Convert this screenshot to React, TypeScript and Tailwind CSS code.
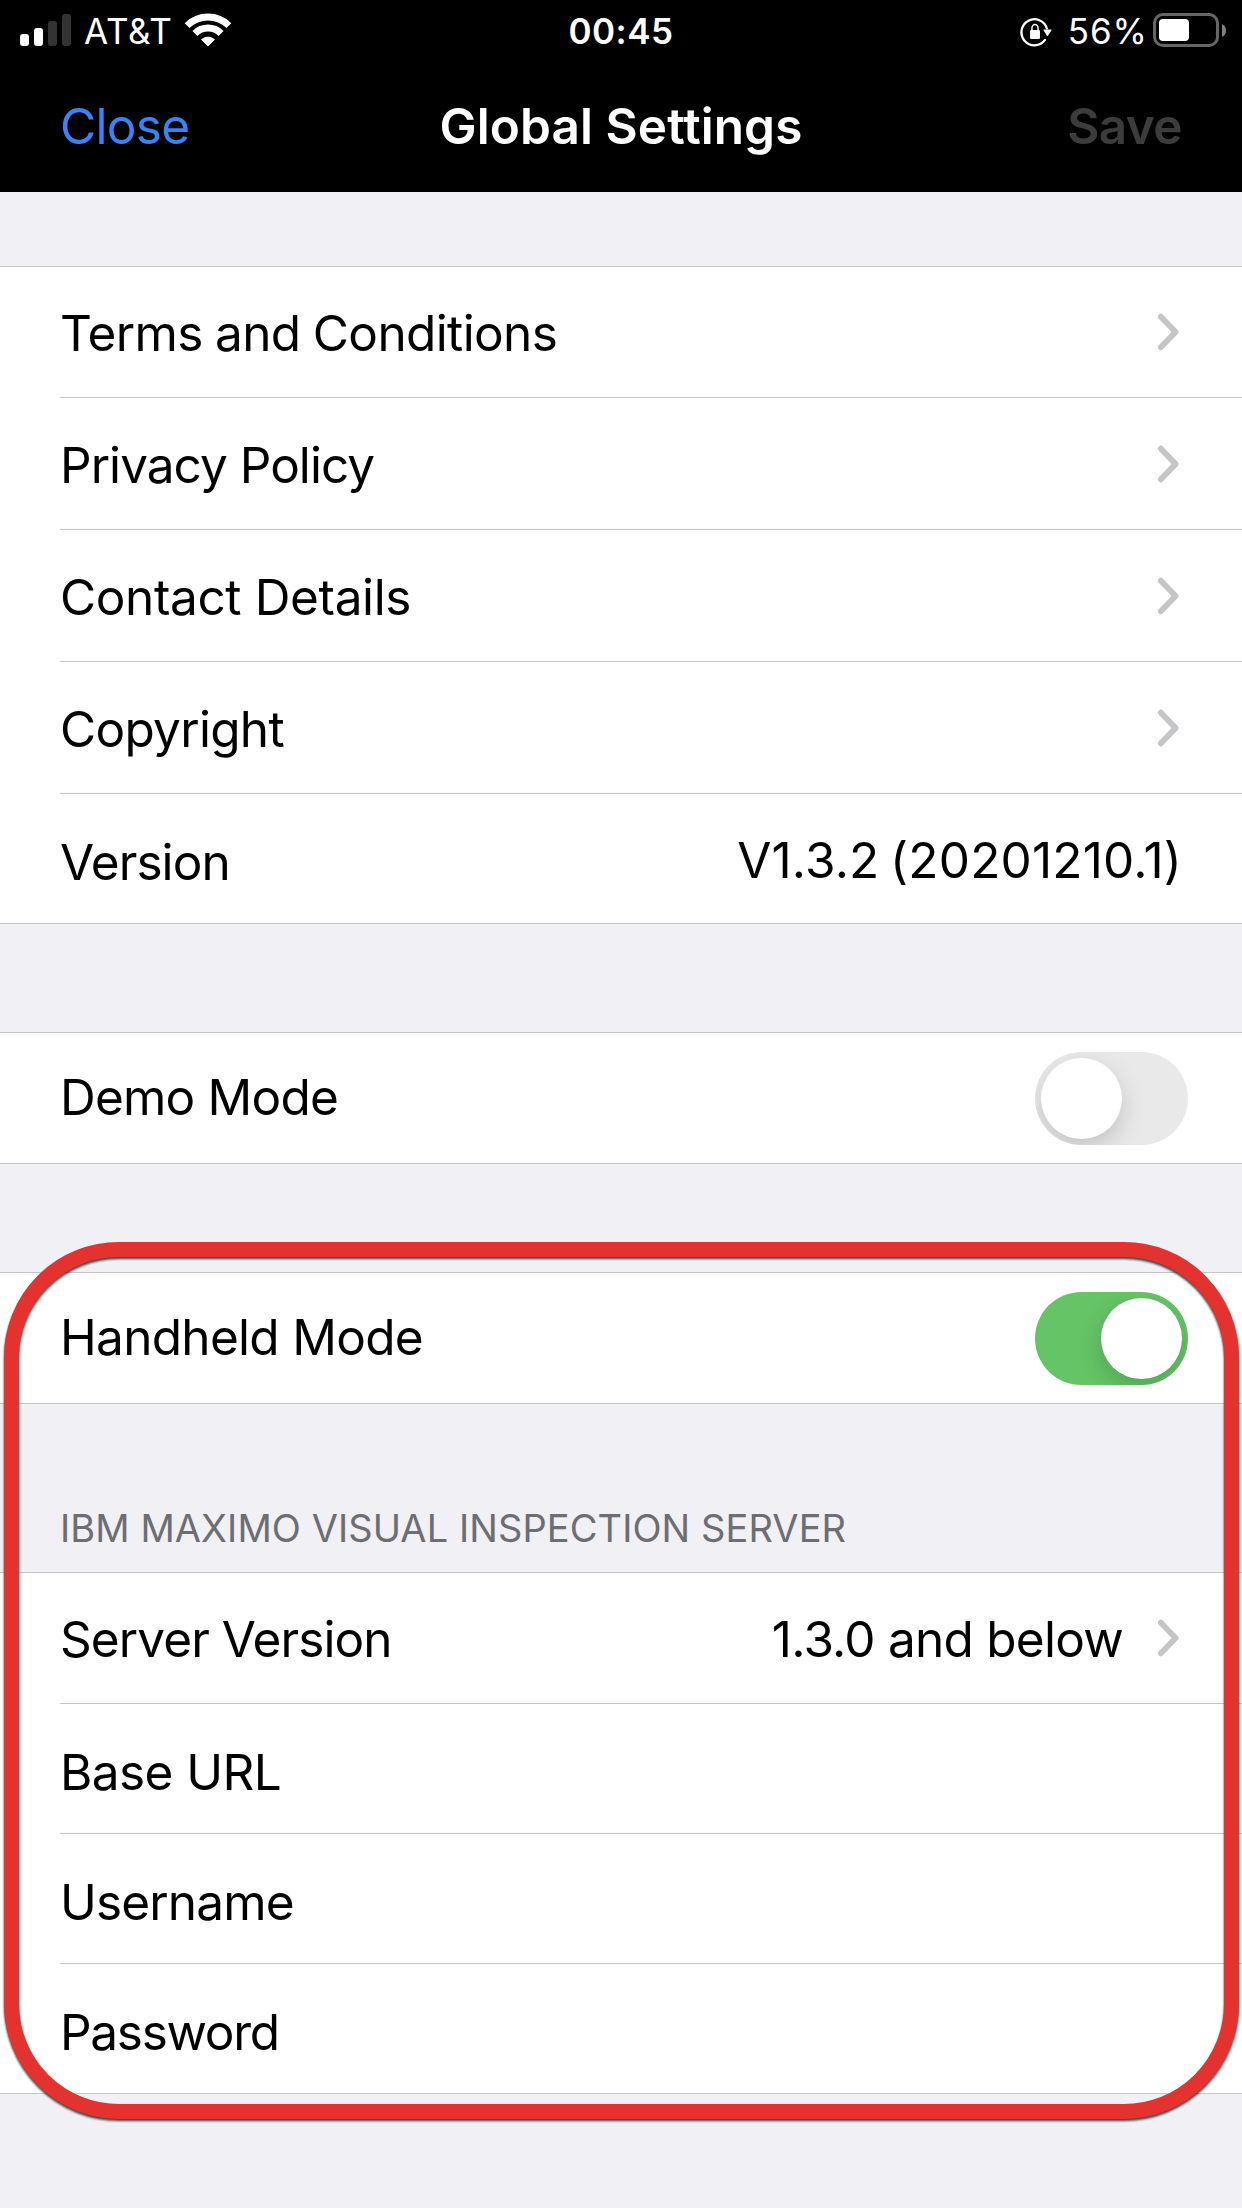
import type { ReactNode } from "react";

function SignalBars() {
  return (
    <div className="flex items-end gap-[5px]">
      <span className="h-3 w-[9px] rounded-[3px] bg-white" />
      <span className="h-[18px] w-[9px] rounded-[3px] bg-white" />
      <span className="h-[25px] w-[9px] rounded-[3px] bg-[#333333]" />
      <span className="h-8 w-[9px] rounded-[3px] bg-[#333333]" />
    </div>
  );
}

function WifiIcon() {
  return (
    <svg width="48" height="34" viewBox="0 0 48 34" fill="none" stroke="white">
      <path d="M3.14 12.64A29.5 29.5 0 0 1 44.86 12.64" strokeWidth="7" />
      <path d="M10.92 20.42A18.5 18.5 0 0 1 37.08 20.42" strokeWidth="7" />
      <path d="M24 33L17.6 26.6A9.6 9.6 0 0 1 30.4 26.6Z" fill="white" strokeWidth="1" strokeLinejoin="round" />
    </svg>
  );
}

function RotationLockIcon() {
  return (
    <svg width="32" height="30" viewBox="0 0 32 30" fill="none" stroke="white">
      <path d="M26.9 11.5A13 13 0 1 0 25 22.9" strokeWidth="2.3" strokeLinecap="round" />
      <path d="M24 13H31L27.4 18.4Z" fill="white" strokeWidth="1.2" strokeLinejoin="round" />
      <rect x="10" y="13" width="10" height="9" rx="1.3" fill="white" stroke="none" />
      <path d="M11.9 14V11.2a3.1 3.6 0 0 1 6.2 0V14" strokeWidth="1.5" />
    </svg>
  );
}

function BatteryIcon() {
  return (
    <div className="flex items-center">
      <div className="h-[34px] w-[66px] rounded-[10px] border-[3px] border-[#666666] p-[3px]">
        <div className="h-[22px] w-[30px] rounded-[4px] bg-white" />
      </div>
      <svg className="ml-[3px]" width="4" height="13" viewBox="0 0 4 13">
        <path d="M0 0Q4 2 4 6.5T0 13Z" fill="#808080" />
      </svg>
    </div>
  );
}

function Chevron() {
  return (
    <svg width="22" height="38" viewBox="0 0 22 38" fill="none">
      <path d="M3.9 3.7L18.6 19L3.9 34.3" stroke="#c5c5c7" strokeWidth="5.8" strokeLinecap="round" strokeLinejoin="round" />
    </svg>
  );
}

function Toggle({ on }: { on: boolean }) {
  return (
    <div
      role="switch"
      aria-checked={on}
      className={`flex h-[93px] w-[153px] overflow-hidden rounded-full p-[6px] ${on ? "justify-end bg-[#65c466]" : "justify-start bg-[#e9e9e9]"}`}
    >
      <div className="size-[81px] rounded-full bg-white shadow-[0_9px_24px_rgba(0,0,0,0.17)]" />
    </div>
  );
}

function Section({ children }: { children: ReactNode }) {
  return <section className="border-y border-[#c6c6c8] bg-white">{children}</section>;
}

type RowProps = {
  label: string;
  labelClass: string;
  rowClass: string;
  divider?: boolean;
  children?: ReactNode;
};

function Row({ label, labelClass, rowClass, divider = true, children }: RowProps) {
  return (
    <div className={`ml-[60px] flex items-center justify-between ${rowClass} ${divider ? "border-b border-[#c6c6c8]" : ""}`}>
      <span className={labelClass}>{label}</span>
      {children}
    </div>
  );
}

export default function App() {
  return (
    <div className="relative h-[2208px] w-[1242px] overflow-hidden bg-[#f1f0f5] font-['Inter',sans-serif] text-[49.5px] leading-[60px] whitespace-nowrap text-black">
      <header className="h-[192px] bg-black text-white">
        <div className="grid h-[60px] grid-cols-[1fr_auto_1fr] items-center text-[35px] leading-[40px]">
          <div className="flex items-center pl-5">
            <SignalBars />
            <span className="ml-[13px] pt-px tracking-[0.72px]">AT&amp;T</span>
            <span className="ml-[11px] h-[34px]"><WifiIcon /></span>
          </div>
          <span className="pt-px font-semibold tracking-[0.5px]">00:45</span>
          <div className="flex items-center justify-end pr-4">
            <span className="pt-1"><RotationLockIcon /></span>
            <span className="mr-[5px] ml-4 pt-px tracking-[1px]">56%</span>
            <BatteryIcon />
          </div>
        </div>
        <div className="grid h-[132px] grid-cols-[1fr_auto_1fr] items-center px-[60px]">
          <span className="tracking-[-0.7px] text-[#3a82f7]">Close</span>
          <h1 className="font-semibold tracking-[0.08px]">Global Settings</h1>
          <span className="text-right font-semibold tracking-[-0.6px] text-[#3c3c3c]">Save</span>
        </div>
      </header>

      <main>
        <div className="h-[74px]" />
        <Section>
          <Row label="Terms and Conditions" labelClass="tracking-[-0.62px] [word-spacing:-1px] pt-[2px]" rowClass="h-[131px] pr-[63px]"><Chevron /></Row>
          <Row label="Privacy Policy" labelClass="tracking-[-0.96px] pt-[3px]" rowClass="h-[132px] pr-[63px]"><Chevron /></Row>
          <Row label="Contact Details" labelClass="tracking-[-0.37px] pt-[3px]" rowClass="h-[132px] pr-[63px]"><Chevron /></Row>
          <Row label="Copyright" labelClass="tracking-[-0.7px] pt-[3px]" rowClass="h-[132px] pr-[63px]"><Chevron /></Row>
          <Row label="Version" labelClass="tracking-[-0.91px] pt-[6px]" rowClass="h-[129px] pr-[60px]" divider={false}>
            <span className="pt-[2px] tracking-[0.2px] [word-spacing:-3.5px]">V1.3.2 (20201210.1)</span>
          </Row>
        </Section>

        <div className="h-[108px]" />
        <Section>
          <Row label="Demo Mode" labelClass="tracking-[-0.79px] pb-[2px]" rowClass="h-[130px] pr-[54px]" divider={false}>
            <Toggle on={false} />
          </Row>
        </Section>

        <div className="h-[108px]" />
        <Section>
          <Row label="Handheld Mode" labelClass="tracking-[-0.7px] pb-[2px]" rowClass="h-[130px] pr-[54px]" divider={false}>
            <Toggle on />
          </Row>
        </Section>

        <h2 className="flex h-[168px] items-end pb-[24px] pl-[60px] text-[38px] leading-[40px] tracking-[0.08px] text-[#6d6d72]">
          IBM MAXIMO VISUAL INSPECTION SERVER
        </h2>
        <Section>
          <Row label="Server Version" labelClass="tracking-[-0.92px] pt-[2px]" rowClass="h-[131px] pr-[63px]">
            <span className="flex items-center">
              <span className="mr-[34px] pt-[2px] tracking-[-0.75px]">1.3.0 and below</span>
              <Chevron />
            </span>
          </Row>
          <Row label="Base URL" labelClass="tracking-[-0.57px] pt-[6px]" rowClass="h-[130px]" />
          <Row label="Username" labelClass="tracking-[-0.85px] pt-[6px]" rowClass="h-[130px]" />
          <Row label="Password" labelClass="tracking-[-1.3px] pt-[6px]" rowClass="h-[129px]" divider={false} />
        </Section>
      </main>

      {/* Highlight frame over the handheld and server settings */}
      <div className="pointer-events-none absolute top-[1242px] left-[4px] h-[877px] w-[1235px] rounded-[115px] border-[15px] border-[#e4322f] drop-shadow-[0_2px_1px_rgba(0,0,0,0.75)]" />
    </div>
  );
}
